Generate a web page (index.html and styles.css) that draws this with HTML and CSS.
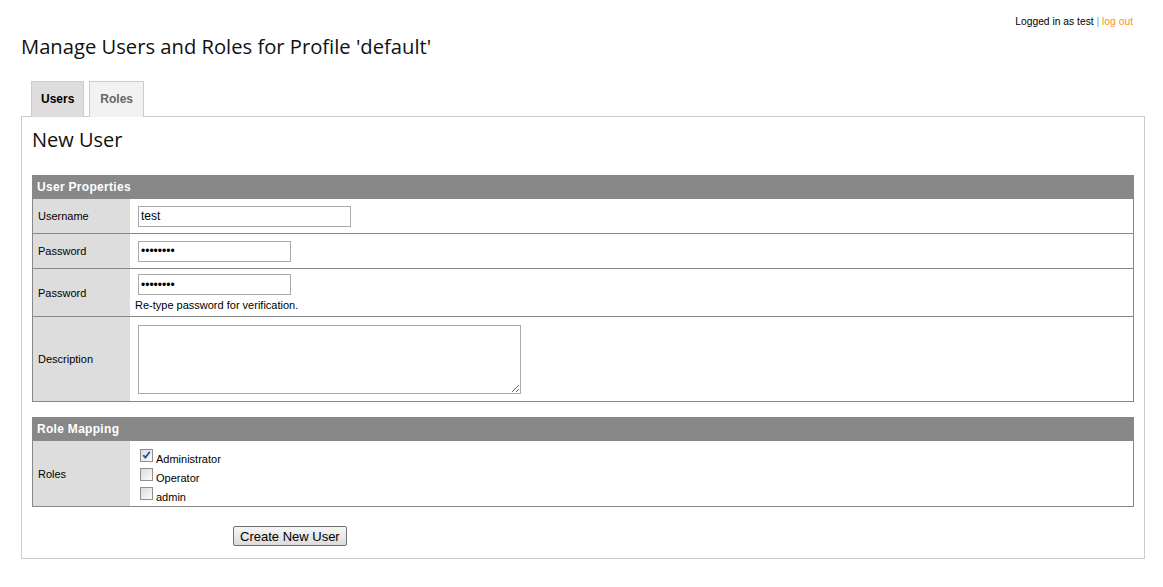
FILE: index.html
```html
<!DOCTYPE html>
<html>
<head>
<meta charset="utf-8">
<link rel="stylesheet" href="styles.css">
</head>
<body>
<div class="topbar">Logged in as test <span class="sep">|</span> <a class="logout" href="#">log out</a></div>
<h1 class="title">Manage Users and Roles for Profile 'default'</h1>
<div class="tabs">
  <div class="tab active">Users</div>
  <div class="tab">Roles</div>
</div>
<div class="panel">
  <h2 class="subtitle">New User</h2>
  <table class="form">
    <tr><th colspan="2" class="head">User Properties</th></tr>
    <tr class="r1"><td class="label">Username</td><td class="field"><input class="txt wide" type="text" value="test"></td></tr>
    <tr class="r1"><td class="label">Password</td><td class="field"><input class="txt" type="password" value="password"></td></tr>
    <tr class="r2"><td class="label">Password</td><td class="field"><input class="txt" type="password" value="password"><div class="hint">Re-type password for verification.</div></td></tr>
    <tr class="r3"><td class="label">Description</td><td class="field"><textarea class="area"></textarea></td></tr>
  </table>
  <table class="form second">
    <tr><th colspan="2" class="head">Role Mapping</th></tr>
    <tr><td class="label">Roles</td><td class="field roles">
      <label class="cb"><span class="box"><svg viewBox="0 0 11 11" width="11" height="11"><path d="M2.2 5.2 L4.4 7.6 L8.8 1.8" fill="none" stroke="#2b4f9e" stroke-width="1.8"/></svg></span>Administrator</label>
      <label class="cb"><span class="box"></span>Operator</label>
      <label class="cb"><span class="box"></span>admin</label>
    </td></tr>
  </table>
  <div class="actions"><button class="btn">Create New User</button></div>
</div>
</body>
</html>
```

FILE: styles.css
```css
body {
  margin: 0;
  font-family: "Liberation Sans", Arial, sans-serif;
  font-size: 11px;
  color: #000;
  background: #fff;
}
.topbar {
  text-align: right;
  padding: 15px 30px 0 0;
  height: 14px;
  line-height: 14px;
  font-size: 10.3px;
}
.sep { color: #6aa8e8; }
.logout { color: #f7931e; text-decoration: none; }
.title {
  margin: 3px 0 0 21px;
  font-family: "Open Sans", sans-serif;
  font-weight: normal;
  font-size: 20.2px;
  line-height: 28px;
  color: #111;
}
.tabs {
  display: flex;
  gap: 5px;
  margin: 21px 0 0 31px;
  position: relative;
  z-index: 1;
}
.tab {
  height: 35px;
  line-height: 35px;
  border: 1px solid #ccc;
  border-bottom: none;
  background: #f2f2f2;
  color: #666;
  font-weight: bold;
  font-size: 12px;
  padding: 0 10px;
}
.tab.active { background: #ddd; color: #000; padding: 0 9px; }
.panel {
  margin: -1px 0 0 21px;
  width: 1102px;
  border: 1px solid #ccc;
  padding: 0 10px 12px 10px;
}
.subtitle {
  font-family: "Open Sans", sans-serif;
  font-weight: normal;
  font-size: 20px;
  line-height: 26px;
  margin: 10px 0 22px 0;
  color: #111;
}
.form {
  width: 1102px;
  border-collapse: collapse;
  border: 1px solid #888;
}
.form.second { margin-top: 15px; }
.head {
  background: #888;
  color: #fff;
  text-align: left;
  font-size: 12px;
  letter-spacing: 0.3px;
  font-weight: bold;
  height: 22px;
  padding: 0 4px;
}
.form td { border-top: 1px solid #888; padding: 0; }
.label {
  width: 92px;
  background: #ddd;
  padding-left: 5px !important;
  vertical-align: middle;
}
.field { padding-left: 5px !important; }
.r1 td { height: 34px; }
.r2 td { height: 47px; }
.r3 td { height: 84px; }
.txt {
  display: block;
  margin-left: 3px;
  width: 147px;
  height: 15px;
  border: 1px solid #aaa;
  padding: 2px 2px;
  font-family: "Liberation Sans", Arial, sans-serif;
  font-size: 12px;
}
.txt.wide { width: 207px; }
.hint { margin-top: 4px; }
.area {
  display: block;
  margin-left: 3px;
  width: 377px;
  height: 63px;
  border: 1px solid #aaa;
  padding: 2px;
}
.roles { padding: 5px 0 3px 5px !important; }
.cb { display: flex; align-items: flex-end; height: 19px; }
.box {
  box-sizing: border-box;
  width: 13px;
  height: 13px;
  margin: 0 3px 3px 5px;
  border: 1px solid #8e8f8f;
  background: linear-gradient(135deg, #dcdcdc, #fbfbfb);
  display: flex;
  align-items: center;
  justify-content: center;
}
.box svg { display: block; }
.actions { padding: 19px 0 0 201px; }
.btn {
  font-family: "Liberation Sans", Arial, sans-serif;
  font-size: 13px;
  height: 20px;
  padding: 0 6px;
  border: 1px solid #707070;
  border-radius: 2px;
  background: linear-gradient(#f6f6f6, #dcdcdc);
}
```
